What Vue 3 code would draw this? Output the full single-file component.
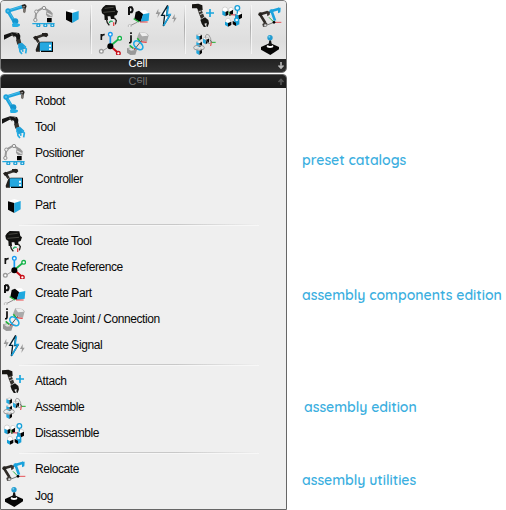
<script setup>
import { h } from 'vue'

const icons = {
  robot: {
    box: '12 9 72 72',
    art: `<path d="M25 33L68 20M25 35L44 67" fill="none" stroke="#1ba3dc" stroke-width="10"/><path d="M26 31L65 19M29 39L43 62" fill="none" stroke="#62c4ea" stroke-width="2"/><circle cx="24" cy="33" r="8" fill="#1ba3dc"/><circle cx="24" cy="33" r="2.5" fill="#8ad4ef"/><circle cx="46" cy="64" r="9" fill="#1595cf"/><path d="M36 72L43 67L60 73L59 78L47 83L37 80Z" fill="#25aee4"/><path d="M65 15L75 12L80 18L77 27L67 25Z" fill="#25221f"/><path d="M69 27L78 26L77 36L73 40L69 36Z" fill="#77736e"/><path d="M67 21L75 20" stroke="#aaa" stroke-width="3"/>`
  },
  tool: {
    box: '12 93 72 72',
    art: `<path d="M12 105L36 97L57 99L61 107L60 121L50 122L48 110L35 107L12 119Z" fill="#151515"/><path d="M34 101L42 112M47 99L54 102" stroke="#62605c" stroke-width="3"/><path d="M48 119L61 117L64 129L52 134Z" fill="#37342f"/><path d="M54 131L66 128L79 140L75 146L61 151L55 143Z" fill="#209fd7"/><path d="M58 141L60 155L66 162M71 138L79 147L77 160M67 148L69 155" fill="none" stroke="#24ace3" stroke-width="5"/>`
  },
  positioner: {
    box: '96 9 72 72',
    art: `<path d="M106 58L109 35L130 23L148 34V43" fill="none" stroke="#999" stroke-width="6"/><g fill="#eee" stroke="#929292" stroke-width="3"><circle cx="109" cy="35" r="5"/><circle cx="132" cy="24" r="5"/><circle cx="106" cy="60" r="5"/></g><path d="M139 34L151 32L158 40L157 52L144 52L138 44Z" fill="#999"/><path d="M141 39L155 47" stroke="#ddd" stroke-width="4"/><path d="M141 54H155V67H141Z" fill="#030303"/><path d="M97 71H164" stroke="#22a9df" stroke-width="4"/><g fill="#d8f1fa" stroke="#209fd5" stroke-width="4"><circle cx="115" cy="76" r="4.5"/><circle cx="136" cy="76" r="4.5"/><circle cx="157" cy="76" r="4.5"/></g>`
  },
  controller: {
    box: '96 93 72 72',
    art: `<path d="M105 114L139 102M108 115L116 127" stroke="#35322e" stroke-width="8"/><path d="M99 112L107 107L115 113L111 119L104 119ZM126 99H142L145 106L139 112L126 107ZM107 149L115 128L120 126V155H108Z" fill="#24211e"/><path d="M121 125H159V156H123V151H117V128H121Z" fill="#030303"/><path d="M119 129L123 127H156V152H119Z" fill="#25a8e0"/><path d="M147 134h6v6h-6zM147 145h6v5h-6z" fill="#fff"/>`
  },
  part: {
    box: '180 9 72 72',
    art: `<path d="M217 27L236 33L217 39L198 33Z" fill="#fff"/><path d="M198 34L217 39V69L198 59Z" fill="#030303"/><path d="M217 39L236 33V58L217 69Z" fill="#20a8df"/>`
  },
  createTool: {
    box: '24 9 72 72',
    art: `<path d="M39 22L47 15L76 16L79 30L84 34L80 45L73 47L73 57H63L61 49H53L54 60H44L43 45L36 40L34 29Z" fill="#11110f"/><path d="M44 25L71 22M40 37L75 34" stroke="#464640" stroke-width="3"/><path d="M49 57L52 68L58 76M73 54L79 62L76 73" fill="none" stroke="#24231f" stroke-width="4"/><path d="M58 69Q61 60 68 65" fill="none" stroke="#24ad63" stroke-width="4"/><path d="M71 67V78" stroke="#e44343" stroke-width="4"/>`
  },
  reference: {
    box: '24 93 72 72',
    art: `<path d="M61 138L37 153" stroke="#999" stroke-width="3"/><path d="M61 138V107" stroke="#1599f2" stroke-width="5"/><path d="M61 138L86 117" stroke="#16b34b" stroke-width="5"/><path d="M61 138L84 158" stroke="#c80d17" stroke-width="6"/><g fill="#fff" stroke-width="4"><circle cx="61" cy="103" r="5.5" stroke="#1599f2"/><circle cx="89" cy="115" r="5.5" stroke="#16b34b"/><circle cx="85" cy="160" r="5.5" stroke="#c80d17"/><circle cx="34" cy="154" r="5.5" stroke="#999"/></g><circle cx="61" cy="139" r="9"/><path d="M34 120V102M34 110Q36 103 44 104" fill="none" stroke="#111" stroke-width="5"/>`
  },
  createPart: {
    box: '108 9 72 72',
    art: `<path d="M121 77L143 66" stroke="#929292" stroke-width="3"/><circle cx="119" cy="78" r="4.5" fill="#eee" stroke="#aaa" stroke-width="2"/><path d="M147 32L166 30L177 41L155 44Z" fill="#fff"/><path d="M137 36L147 32L160 43L152 66L133 58Z" fill="#050505"/><path d="M159 43L178 39L176 62L152 66Z" fill="#20a8df"/><path d="M131 56L147 66" stroke="#26b43c" stroke-width="4"/><path d="M150 66H173" stroke="#eb4545" stroke-width="3"/><path d="M117 45V21M117 22H125Q131 29 125 37H117" fill="none" stroke="#111" stroke-width="6"/>`
  },
  joint: {
    box: '108 93 72 72',
    art: `<path d="M148 96L169 99L176 106L171 125L151 121L141 113Z" fill="#aaa"/><path d="M148 97L169 100L174 107L156 109Z" fill="#eee"/><path d="M111 145L127 141L141 149L136 164L121 165L111 158Z" fill="#999"/><path d="M114 146L127 143L139 149L123 152Z" fill="#ddd"/><path d="M142 115L151 126M119 136L130 145" stroke="#25ad3b" stroke-width="5"/><path d="M151 125L170 127M131 146L149 148" stroke="#e14444" stroke-width="4"/><path d="M133 149L155 121" stroke="#555" stroke-width="3"/><ellipse cx="145" cy="136" rx="16" ry="10" transform="rotate(43 145 136)" fill="none" stroke="#1aabe5" stroke-width="5"/><path d="M123 106V124Q123 129 117 128M123 97v5" fill="none" stroke="#080808" stroke-width="5"/>`
  },
  signal: {
    box: '192 9 72 72',
    art: `<path d="M205 26L197 42H204L202 54L212 37H205ZM254 42L246 57H252L250 69L260 53H254Z" fill="#999"/><path d="M233 16L215 46H224L220 78L239 47H230Z" fill="#fff" stroke="#071e2b" stroke-width="4"/><path d="M235 19L231 44H240L221 77" fill="none" stroke="#1aa5e0" stroke-width="5"/>`
  },
  attach: {
    box: '15 9 72 72',
    art: `<path d="M15 13L34 11L46 16L47 30L34 32L30 25L15 25Z" fill="#171512"/><path d="M32 31L43 28L52 50L42 57Z" fill="#35312d"/><path d="M34 36L43 33M38 44L48 40" stroke="#bbb" stroke-width="3"/><path d="M40 59L54 52L64 60L66 70L62 81L58 79L59 69L52 71L57 81L51 82L44 71Z" fill="#171614"/><path d="M57 39H81M69 27V51" stroke="#19a5dd" stroke-width="5"/>`
  },
  assemble: {
    box: '15 93 72 72',
    art: `<g fill="#fff" stroke="#777" stroke-width="1"><path d="M28 105L37 102L45 105L37 109ZM28 126L37 122L45 126L37 130ZM28 148L37 144L45 148L37 152ZM47 116L56 111L66 115L56 121Z"/></g><path d="M37 109L45 105V116L37 121ZM37 130L45 126V137L37 141ZM37 152L45 148V159L37 165ZM56 120L66 116V127L56 133Z" fill="#050505"/><path d="M28 106L37 109V121L28 116ZM28 127L37 130V141L28 137ZM28 149L37 152V165L28 160ZM48 116L56 120V133L48 128Z" fill="#22a9df"/><ellipse cx="36" cy="143" rx="16" ry="7" fill="none" stroke="#999" stroke-width="3"/><ellipse cx="64" cy="117" rx="7" ry="15" transform="rotate(-20 64 117)" fill="none" stroke="#888" stroke-width="2"/><path d="M68 119L75 128" stroke="#333" stroke-width="2"/><path d="M73 127H86" stroke="#24ae31" stroke-width="3"/><path d="M73 127L71 138" stroke="#e23c3c" stroke-width="3"/>`
  },
  disassemble: {
    box: '99 9 72 72',
    art: `<g fill="#fff" stroke="#999" stroke-width="1"><circle cx="114" cy="29" r="8"/><circle cx="132" cy="29" r="7"/><circle cx="123" cy="63" r="8"/><circle cx="157" cy="41" r="7"/></g><path d="M115 36L124 32V44L115 49ZM127 36L138 29V42L127 48ZM123 69L133 65V75L123 80ZM137 63L147 67V78L137 73ZM154 46L165 41V53L154 59Z" fill="#030303"/><path d="M106 32L115 36V49L106 44ZM114 65L123 69V80L114 75ZM147 67L157 62V73L147 78ZM144 41L154 46V59L144 53Z" fill="#159fd7"/><g fill="#e8f8fe" stroke="#169fd8" stroke-width="4"><circle cx="151" cy="24" r="7"/><circle cx="149" cy="60" r="6"/></g><path d="M151 30V41" stroke="#169fd8" stroke-width="4"/><path d="M130 44L146 45" stroke="#cf3345" stroke-width="3"/><path d="M124 35L131 46" stroke="#36ad43" stroke-width="3"/>`
  },
  relocate: {
    box: '213 9 72 72',
    art: `<path d="M253 33L277 26M255 37L264 62" fill="none" stroke="#1aa2dc" stroke-width="8"/><circle cx="253" cy="34" r="6" fill="#1aa2dc"/><path d="M273 23H281L280 37L273 40Z" fill="#1aa2dc"/><path d="M219 43L243 36M221 46L235 69" fill="none" stroke="#302c28" stroke-width="8"/><circle cx="220" cy="43" r="6" fill="#25221e"/><path d="M239 32L249 35L248 44L241 49ZM226 72L236 66L242 72L237 80H228Z" fill="#36322e"/><path d="M235 77L261 67" stroke="#777" stroke-width="3"/><circle cx="235" cy="76" r="4" fill="#ddd" stroke="#777" stroke-width="2"/><path d="M261 67L246 52" stroke="#2cad39" stroke-width="3"/><path d="M262 67H283" stroke="#e55358" stroke-width="3"/><circle cx="261" cy="67" r="4"/>`
  },
  jog: {
    box: '213 93 72 72',
    art: `<path d="M222 141L249 129L276 141V148L250 165L222 149Z" fill="#050505"/><ellipse cx="249" cy="139" rx="10" ry="5" fill="#fff"/><path d="M244 138L247 121H252L255 138Z" fill="#111"/><circle cx="249" cy="113" r="8" fill="#229bd0"/><circle cx="247" cy="110" r="3" fill="#74cdeb"/>`
  }
}

const Icon = (props) => h('svg', {
  class: 'icon', width: 24, height: 24, viewBox: icons[props.name].box,
  innerHTML: icons[props.name].art, 'aria-hidden': 'true'
})
Icon.props = ['name']

const toolbar = [
  ['robot', 'positioner', 'part', 'tool', 'controller'],
  ['createTool', 'createPart', 'signal', 'reference', 'joint'],
  ['attach', 'disassemble', 'assemble'],
  ['relocate', 'jog']
]

const sections = [
  [['robot', 'Robot'], ['tool', 'Tool'], ['positioner', 'Positioner'], ['controller', 'Controller'], ['part', 'Part']],
  [['createTool', 'Create Tool'], ['reference', 'Create Reference'], ['createPart', 'Create Part'], ['joint', 'Create Joint / Connection'], ['signal', 'Create Signal']],
  [['attach', 'Attach'], ['assemble', 'Assemble'], ['disassemble', 'Disassemble']],
  [['relocate', 'Relocate'], ['jog', 'Jog']]
]
</script>

<template>
  <main class="page">
    <div class="panel">
      <header class="ribbon">
        <div class="tools">
          <div v-for="(group, i) in toolbar" :key="i" class="group" :class="'group-' + i">
            <Icon v-for="name in group" :key="name" :name="name" />
          </div>
        </div>
        <div class="bar">
          <span class="title">Cell</span>
          <svg class="arrow" width="8" height="8" viewBox="0 0 8 8"><path d="M4 0V5M1.5 3.5L4 6L6.5 3.5" /></svg>
        </div>
      </header>
      <section class="menu">
        <div class="bar bar-open">
          <span class="title flipped">Cell</span>
          <svg class="arrow" width="8" height="8" viewBox="0 0 8 8"><path d="M4 7V2M1.5 4L4 1.5L6.5 4" /></svg>
        </div>
        <ul v-for="(rows, i) in sections" :key="i" class="section">
          <li v-for="row in rows" :key="row[0]" class="row">
            <Icon :name="row[0]" /><span class="text">{{ row[1] }}</span>
          </li>
        </ul>
      </section>
    </div>
    <aside class="notes">
      <p class="note presets">preset catalogs</p>
      <p class="note components">assembly components edition</p>
      <p class="note edition">assembly edition</p>
      <p class="note utilities">assembly utilities</p>
    </aside>
  </main>
</template>

<style>
body { background: #fff; }
</style>

<style scoped>
.page { display: flex; width: 506px; height: 510px; overflow: hidden; font-family: "Liberation Sans", Arial, sans-serif; }
.panel { width: 287px; flex: none; }
.ribbon { box-sizing: border-box; height: 73px; border: 1px solid #777; border-radius: 4px 4px 5px 5px; overflow: hidden; background: #e5e5e5; }
.tools { display: flex; height: 58px; box-sizing: border-box; padding: 2px 0 0 3px; background: linear-gradient(#ececec, #dedede 70%, #e7e7e7); }
.group { position: relative; display: grid; grid-template-columns: repeat(3, 24px); grid-auto-rows: 24px; gap: 4px; width: 94px; flex: none; }
.group-2 { grid-template-columns: repeat(2, 24px); width: 66px; }
.group-3 { grid-template-columns: 24px; width: 24px; }
.group:not(:last-child)::after { content: ""; position: absolute; right: 7px; top: 2px; width: 1px; height: 49px; background: linear-gradient(transparent, #aaa 45%, transparent); box-shadow: 1px 0 #f4f4f4; }
.icon { display: block; flex: none; }
.bar { display: flex; justify-content: center; height: 13px; position: relative; background: linear-gradient(#222, #303030); color: #fff; font-size: 11px; line-height: 8px; }
.title { margin-right: 11px; }
.arrow { position: absolute; right: 1px; top: 3px; fill: none; stroke: #bbb; stroke-width: 1.6; }
.menu { box-sizing: border-box; height: 436px; margin-top: 1px; border: 1px solid #666; border-radius: 4px 4px 0 0; overflow: hidden; background: #efefef; }
.bar-open { background: linear-gradient(#242424, #191919); color: #777; }
.bar-open .arrow { stroke: #555; }
.flipped { display: block; height: 12px; line-height: 12px; margin-top: 0; transform: scaleY(-1); }
.section { list-style: none; margin: 0; padding: 0 0 0 1px; }
.section + .section { position: relative; padding-top: 10px; }
.section + .section::before { content: ""; position: absolute; top: 6px; left: 18px; width: 240px; height: 1px; background: linear-gradient(90deg, transparent, #c8c8c8 25%, #c8c8c8 65%, transparent); box-shadow: 0 1px rgba(255,255,255,.5); }
.row { display: flex; align-items: center; height: 26px; gap: 9px; color: #080808; font-size: 12px; line-height: 14px; letter-spacing: -.43px; white-space: nowrap; }
.section:last-child .row:last-child .text { padding-top: 2px; }
.notes { padding-left: 15px; font-family: Quicksand, Lato, sans-serif; font-size: 14px; line-height: 20px; color: #3cafe0; white-space: nowrap; }
.note { margin: 0; font-weight: 600; }
.presets { margin-top: 150px; }
.components { margin-top: 115px; }
.edition { margin: 92px 0 0 2px; }
.utilities { margin-top: 53px; }
</style>
